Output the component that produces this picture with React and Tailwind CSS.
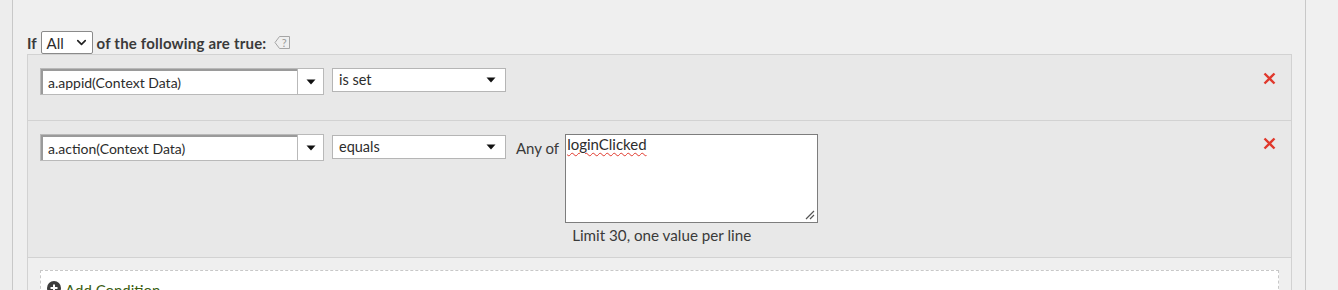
import React from "react";
import { ChevronDown } from "lucide-react";

const font = { fontFamily: '"Lato", "Noto Sans", sans-serif' };

function Tri() {
  return (
    <svg width="10" height="6" viewBox="0 0 10 6">
      <path d="M0.5 0.5 H9.5 L5 5.5 Z" fill="#111" />
    </svg>
  );
}

function Combo({ value }) {
  return (
    <div className="flex h-[27px] w-[284px] border border-[#b9b9b9] bg-white">
      <div className="flex flex-1 items-center border-l-2 border-t-2 border-[#9a9a9a] pl-[5px] text-[14px] text-[#2c2c2c]">
        {value}
      </div>
      <div className="flex w-[26px] items-center justify-center border-l border-[#b9b9b9]">
        <Tri />
      </div>
    </div>
  );
}

function Select({ value }) {
  return (
    <div className="flex h-[24px] w-[174px] items-center justify-between border border-[#b5b5b5] bg-white pl-[6px] pr-[9px] text-[14.5px] text-[#2c2c2c]">
      <span>{value}</span>
      <Tri />
    </div>
  );
}

function XIcon() {
  return (
    <svg width="13" height="13" viewBox="0 0 13 13">
      <path d="M1.5 1.5 L11.5 11.5 M11.5 1.5 L1.5 11.5" stroke="#e0382c" strokeWidth="2.4" strokeLinecap="butt" />
    </svg>
  );
}

export default function App() {
  return (
    <div className="flex h-[290px] w-full overflow-hidden bg-[#ededed]" style={font}>
      <div className="w-[12px] shrink-0" />
      <div className="w-[1294px] shrink-0 border-x border-[#c8c8c8] bg-[#efefef] pl-[14px] pt-[31px]">
        <div className="flex h-[23px] items-start">
          <span className="mt-[1px] text-[15px] font-bold text-[#3a3a3a]">If</span>
          <div className="ml-[4px] flex h-[23px] w-[52px] items-center justify-between rounded-[2px] border border-[#8a8a8a] bg-white pl-[5px] pr-[3px] text-[15px] text-[#2c2c2c]">
            <span className="mt-[2px]">All</span>
            <ChevronDown size={15} strokeWidth={2.6} color="#222" />
          </div>
          <span className="ml-[4px] mt-[1px] text-[15px] font-bold tracking-[0.2px] text-[#3a3a3a]">of the following are true:</span>
          <svg className="ml-[8px] mt-[4px]" width="17" height="15" viewBox="0 0 17 15">
            <path d="M5.5 1.5 H15.5 V13.5 H5.5 L1 7.5 Z" fill="none" stroke="#a5a5a5" strokeWidth="1" />
            <text x="10.3" y="12" fontSize="11" textAnchor="middle" fill="#9a9a9a" fontFamily="Lato, sans-serif">?</text>
          </svg>
        </div>
        <div className="w-[1265px] border-x border-[#d2d2d2]">
          <div className="relative h-[67px] border-y border-[#d2d2d2] bg-[#e8e8e8] pl-[12px] pt-[13px]">
            <div className="flex items-start gap-[8px]">
              <Combo value="a.appid(Context Data)" />
              <Select value="is set" />
            </div>
            <div className="absolute right-[15px] top-[17px]">
              <XIcon />
            </div>
          </div>
          <div className="relative h-[137px] border-b border-[#d2d2d2] bg-[#e8e8e8] pl-[12px] pt-[13px]">
            <div className="flex items-start">
              <Combo value="a.action(Context Data)" />
              <div className="ml-[8px] mt-[1px]">
                <Select value="equals" />
              </div>
              <span className="ml-[10px] mt-[3px] text-[15px] text-[#3a3a3a]">Any of</span>
              <div className="ml-[6px] flex flex-col">
                <div className="relative h-[89px] w-[253px] border border-[#7d7d7d] bg-white pl-[1px] text-[15px] leading-[18px] text-[#2c2c2c]">
                  <span className="underline decoration-wavy decoration-[#e0382c] decoration-1 underline-offset-[2px]">loginClicked</span>
                  <svg className="absolute bottom-[2px] right-[2px]" width="10" height="10" viewBox="0 0 10 10">
                    <path d="M1 9 L9 1 M5 9 L9 5" stroke="#555" strokeWidth="1.2" />
                  </svg>
                </div>
                <span className="ml-[7px] mt-[1px] text-[15.2px] text-[#3a3a3a]">Limit 30, one value per line</span>
              </div>
            </div>
            <div className="absolute right-[15px] top-[16px]">
              <XIcon />
            </div>
          </div>
          <div className="pl-[12px] pt-[12px]">
            <div className="flex h-[40px] w-[1239px] items-start border border-dashed border-[#c8c8c8] bg-white pl-[6px] pt-[8px]">
              <svg width="14" height="14" viewBox="0 0 14 14" className="mt-[2px]">
                <circle cx="7" cy="7" r="7" fill="#3d3d3d" />
                <path d="M7 3.5 V10.5 M3.5 7 H10.5" stroke="#fff" strokeWidth="2" />
              </svg>
              <span className="ml-[4px] text-[15px] text-[#3b5e12]">Add Condition</span>
            </div>
          </div>
        </div>
      </div>
      <div className="flex-1 bg-[#f0f0f0]" />
    </div>
  );
}
